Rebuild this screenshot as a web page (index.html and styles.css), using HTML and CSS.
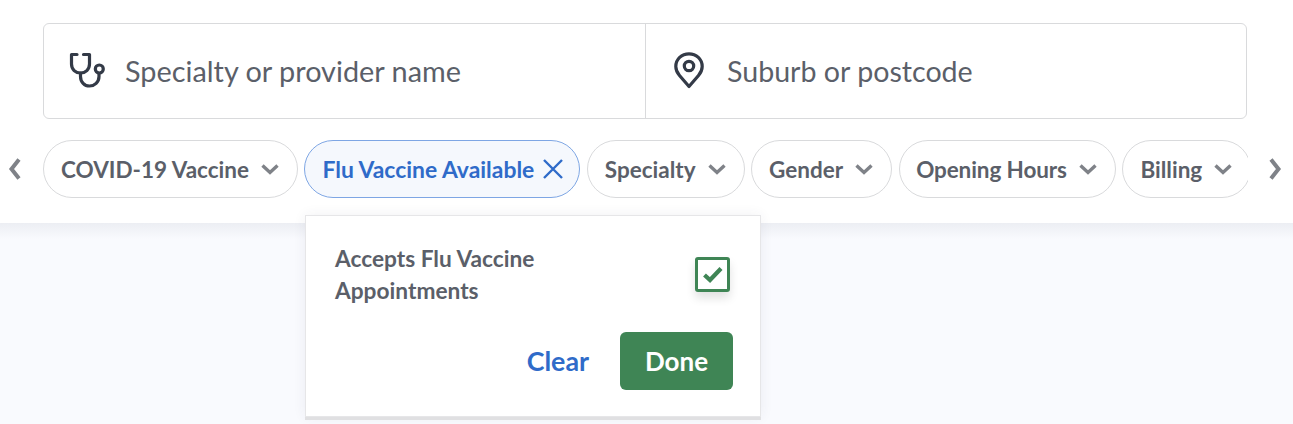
FILE: index.html
```html
<!DOCTYPE html>
<html lang="en">
<head>
<meta charset="utf-8">
<title>Search</title>
<link rel="stylesheet" href="styles.css">
</head>
<body>
<header class="header">
  <div class="search">
    <div class="field field-left">
      <svg class="field-icon" width="38" height="38" viewBox="0 0 38 38" fill="none" stroke="#333a47" stroke-width="3.200" stroke-linecap="round" stroke-linejoin="round">
        <path d="M10 2.500H4.500V12C4.500 17.500 8.500 21 13.500 21C18.500 21 22.500 17.500 22.500 12V2.500H16.500"/>
        <path d="M13.500 21V24.500C13.500 30 17.500 34 22.500 34C27.500 34 32 30 32 24.500V21.500"/>
        <circle cx="32.300" cy="17" r="4"/>
      </svg>
      <span class="placeholder">Specialty or provider name</span>
    </div>
    <div class="field field-right">
      <svg class="field-icon" width="38" height="38" viewBox="0 0 38 38" fill="none" stroke="#333a47" stroke-width="3.200" stroke-linejoin="round">
        <path d="M19 34.500L9.500 23.500C7 20.500 5.800 17.500 5.800 14.500C5.800 7.200 11.700 1.800 19 1.800C26.300 1.800 32.200 7.200 32.200 14.500C32.200 17.500 31 20.500 28.500 23.500Z"/>
        <circle cx="19" cy="14" r="4.700"/>
      </svg>
      <span class="placeholder">Suburb or postcode</span>
    </div>
  </div>
  <div class="filters">
    <svg class="arrow" width="14" height="22" viewBox="0 0 14 22" fill="none" stroke="#7f8288" stroke-width="4"><path d="M11 1.500L3.500 11L11 20.500"/></svg>
    <div class="chips">
      <div class="chip">COVID-19 Vaccine<svg class="chev" width="18" height="11" viewBox="0 0 18 11" fill="none" stroke="#7f8288" stroke-width="3.400"><path d="M1.500 1.500L9 8.500L16.500 1.500"/></svg></div>
      <div class="chip chip-active">Flu Vaccine Available<svg class="close" width="20" height="20" viewBox="0 0 20 20" fill="none" stroke="#2f6bc9" stroke-width="2.400"><path d="M1 1L19 19M19 1L1 19"/></svg></div>
      <div class="chip">Specialty<svg class="chev" width="18" height="11" viewBox="0 0 18 11" fill="none" stroke="#7f8288" stroke-width="3.400"><path d="M1.500 1.500L9 8.500L16.500 1.500"/></svg></div>
      <div class="chip">Gender<svg class="chev" width="18" height="11" viewBox="0 0 18 11" fill="none" stroke="#7f8288" stroke-width="3.400"><path d="M1.500 1.500L9 8.500L16.500 1.500"/></svg></div>
      <div class="chip chip-tight">Opening Hours<svg class="chev" width="18" height="11" viewBox="0 0 18 11" fill="none" stroke="#7f8288" stroke-width="3.400"><path d="M1.500 1.500L9 8.500L16.500 1.500"/></svg></div>
      <div class="chip">Billing<svg class="chev" width="18" height="11" viewBox="0 0 18 11" fill="none" stroke="#7f8288" stroke-width="3.400"><path d="M1.500 1.500L9 8.500L16.500 1.500"/></svg></div>
    </div>
    <svg class="arrow" width="14" height="22" viewBox="0 0 14 22" fill="none" stroke="#7f8288" stroke-width="4"><path d="M3 1.500L10.500 11L3 20.500"/></svg>
  </div>
</header>
<main class="results"></main>
<div class="popover">
  <div class="option">
    <span class="option-label">Accepts Flu Vaccine Appointments</span>
    <span class="checkbox"><svg width="20" height="16" viewBox="0 0 20 16" fill="none" stroke="#3f8555" stroke-width="4.200"><path d="M1.500 8L7 13L18 1.500"/></svg></span>
  </div>
  <div class="actions">
    <span class="clear">Clear</span>
    <span class="done">Done</span>
  </div>
</div>
</body>
</html>
```
FILE: styles.css
```css
* { box-sizing: border-box; }
html, body { margin: 0; height: 100%; overflow: hidden; }
body { display: flex; flex-direction: column; background: #f9fafe; font-family: Lato, "Liberation Sans", sans-serif; color: #5b5f69; }
.header { flex: none; background: #fff; height: 223px; padding: 23px 46px 0 43px; }
.results { flex: 1; background: linear-gradient(#eceef3, #f9fafe 16px); }
.search { display: flex; height: 96px; border: 1px solid #d9dadc; border-radius: 6px; }
.field { display: flex; align-items: center; }
.field-left { width: 602px; padding-left: 23px; border-right: 1px solid #d9dadc; }
.field-right { flex: 1; padding-left: 24px; }
.field-icon { flex: none; margin-right: 20px; }
.field-right .field-icon { margin-right: 19px; }
.placeholder { font-size: 28.850px; color: #5b5f69; }
.field-right .placeholder { font-size: 28.600px; }
.filters { display: flex; align-items: center; margin: 21px -46px 0 -43px; height: 58px; padding: 0 11px 0 8px; }
.arrow { flex: none; }
.filters .arrow:first-child { margin-right: 21px; }
.filters .arrow:last-child { margin-left: 20px; }
.chips { display: flex; gap: 6.500px; flex: 1; min-width: 0; overflow: hidden; }
.chip { flex: none; display: flex; align-items: center; height: 58px; padding: 0 18px 0 17px; border: 1px solid #d9dadc; border-radius: 29px; font-size: 22.500px; font-weight: 700; color: #5b5f69; background: #fff; white-space: nowrap; }
.chev { margin-left: 12px; }
.chip-active { padding-right: 16px; font-size: 22.900px; background: #f5f8fd; border-color: #7ea6e4; color: #2f6bc9; }
.chip-tight { padding-left: 16.500px; letter-spacing: -0.100px; }
.close { margin-left: 9px; }
.popover { position: absolute; left: 305px; top: 215px; width: 456px; height: 202px; padding: 27px 27px 28px 29px; border: 1px solid #e6e6e8; background: #fff; box-shadow: 0 3px 0 #e0e0e2, 0 0 12px rgba(50,60,90,.07); }
.option { display: flex; justify-content: space-between; align-items: center; }
.option-label { width: 260px; font-size: 22.700px; line-height: 32px; font-weight: 700; color: #5b5f69; }
.checkbox { display: flex; align-items: center; justify-content: center; width: 35px; height: 35px; margin: -1px 3px 0 0; border: 3px solid #3f8555; border-radius: 3px; background: #fff; box-shadow: 0 6px 10px rgba(0,0,0,.12); }
.actions { display: flex; justify-content: flex-end; align-items: center; gap: 31px; margin-top: 25px; }
.clear { font-size: 26.800px; font-weight: 700; color: #2f6bc9; }
.done { display: flex; align-items: center; justify-content: center; width: 113px; height: 58px; border-radius: 6px; background: #3f8555; color: #fff; font-size: 26px; font-weight: 700; }
```
